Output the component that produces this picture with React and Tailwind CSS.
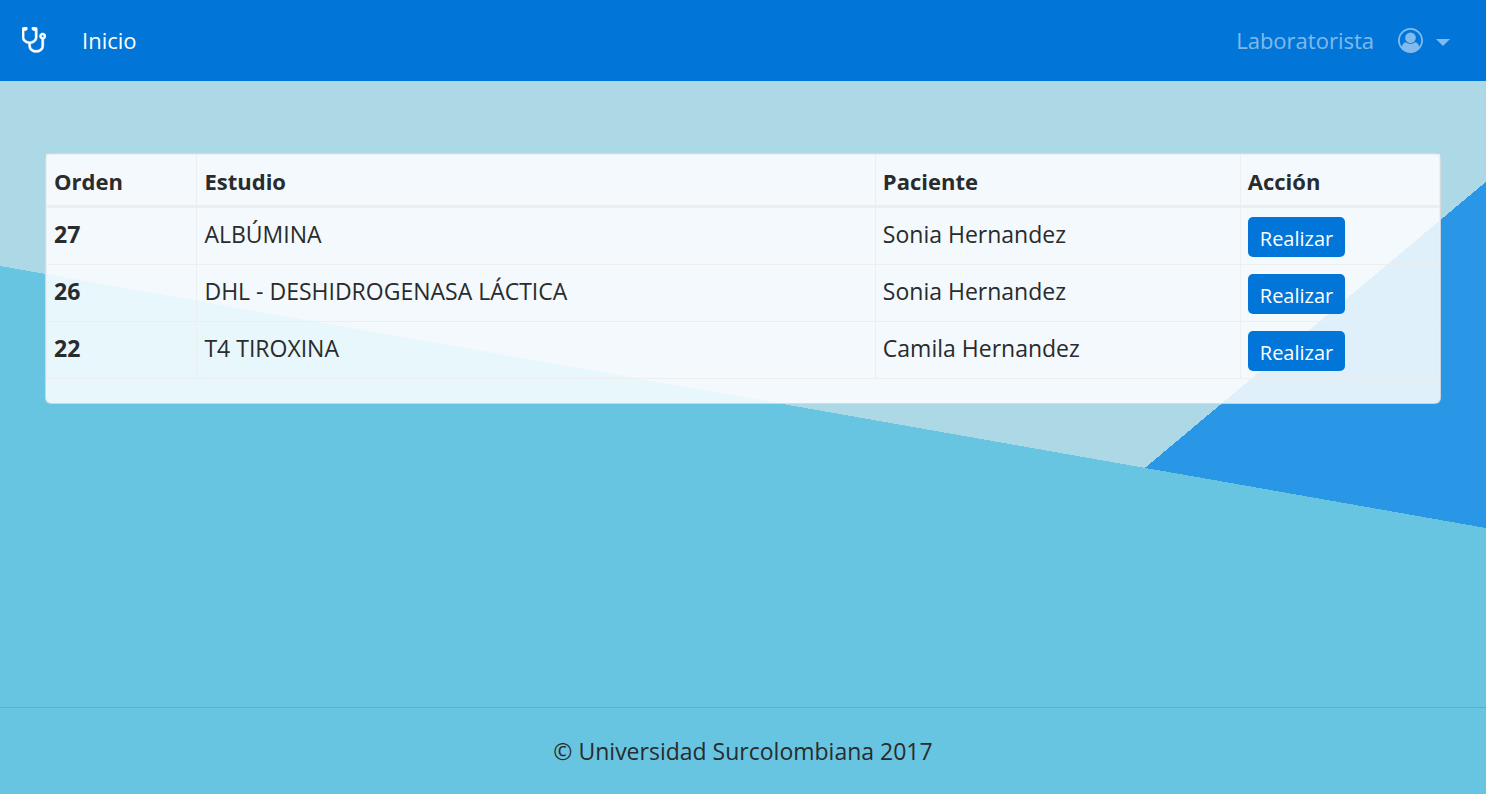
const orders = [
  { id: 27, study: "ALBÚMINA", patient: "Sonia Hernandez" },
  { id: 26, study: "DHL - DESHIDROGENASA LÁCTICA", patient: "Sonia Hernandez" },
  { id: 22, study: "T4 TIROXINA", patient: "Camila Hernandez" },
];

function StethoscopeIcon() {
  return (
    <svg viewBox="64 128 1408 1472" className="h-[26px] w-6" fill="currentColor" stroke="currentColor" strokeWidth="24" aria-hidden="true">
      <path d="M1344 640q0-26-19-45t-45-19-45 19-19 45 19 45 45 19 45-19 19-45zm128 0q0 62-35.500 111t-92.500 70v395q0 159-131.500 271.500t-316.500 112.500-316.500-112.500-131.500-271.500v-132q-164-20-274-128t-110-252v-512q0-26 19-45t45-19q6 0 16 2 17-30 47-48t65-18q53 0 90.500 37.500t37.500 90.500-37.500 90.500-90.500 37.500q-33 0-64-18v402q0 106 94 181t226 75 226-75 94-181v-402q-31 18-64 18-53 0-90.500-37.500t-37.500-90.500 37.500-90.500 90.500-37.500q35 0 65 18t47 48q10-2 16-2 26 0 45 19t19 45v512q0 144-110 252t-274 128v132q0 106 94 181t226 75 226-75 94-181v-395q-57-21-92.500-70t-35.500-111q0-80 56-136t136-56 136 56 56 136z" />
    </svg>
  );
}

function UserIcon() {
  return (
    <svg viewBox="0 0 1792 1792" className="size-[25px]" fill="currentColor" aria-hidden="true">
      <path d="M896 0q182 0 348 71t286 191 191 286 71 348q0 181-70.500 347t-190.500 286-286 191.500-349 71.500-349-71-285.500-191.500-190.500-286-71-347.500 71-348 191-286 286-191 348-71zm619 1351q149-205 149-455 0-156-61-298t-164-245-245-164-298-61-298 61-245 164-164 245-61 298q0 250 149 455 66-327 306-327 131 128 313 128t313-128q240 0 306 327zm-235-647q0-159-112.500-271.500t-271.500-112.500-271.500 112.500-112.500 271.500 112.500 271.500 271.500 112.500 271.500-112.500 112.500-271.500z" />
    </svg>
  );
}

function Navbar() {
  return (
    <nav className="flex items-center justify-between bg-[#0275d8] pt-[22px] pr-9 pb-[23px] pl-[22px] text-[22px]">
      <div className="flex items-center gap-9 text-white">
        <a href="#" aria-label="Laboratorio">
          <StethoscopeIcon />
        </a>
        <a href="#">Inicio</a>
      </div>
      <div className="flex items-center gap-6 text-white/50">
        <a href="#">Laboratorista</a>
        <button type="button" aria-label="Cuenta" className="flex items-center gap-[13px]">
          <UserIcon />
          <span className="mt-1 border-x-[7px] border-t-[7px] border-x-transparent border-t-current" />
        </button>
      </div>
    </nav>
  );
}

function OrdersTable() {
  return (
    <table className="mb-6 w-full table-fixed border-collapse text-left">
      <colgroup>
        <col className="w-[10.8%]" />
        <col className="w-[48.7%]" />
        <col className="w-[26.2%]" />
        <col className="w-[14.3%]" />
      </colgroup>
      <thead>
        <tr className="border-b-[3px] border-[#eceeef]">
          {["Orden", "Estudio", "Paciente", "Acción"].map((title) => (
            <th key={title} scope="col" className="border-x border-t border-[#eceeef] px-[7px] pt-2 pb-1.5 text-[22px] font-bold">
              {title}
            </th>
          ))}
        </tr>
      </thead>
      <tbody>
        {orders.map(({ id, study, patient }) => (
          <tr key={id} className="align-top">
            <th scope="row" className="border border-[#eceeef] px-[7px] py-2 font-bold">{id}</th>
            <td className="border border-[#eceeef] px-[7px] py-2">{study}</td>
            <td className="border border-[#eceeef] px-[7px] py-2">{patient}</td>
            <td className="border border-[#eceeef] px-[7px] pt-[9px] pb-[7px]">
              <button type="button" className="flex h-10 items-center rounded-[5px] bg-[#0275d8] px-3 pt-1 text-[20px] leading-8 text-white">
                Realizar
              </button>
            </td>
          </tr>
        ))}
      </tbody>
    </table>
  );
}

export default function App() {
  return (
    <div className="flex min-h-screen flex-col bg-[linear-gradient(10deg,#68c5e1_50%,transparent_50%),linear-gradient(140deg,#add8e6_70%,#2997e5_70%)] font-['Open_Sans',sans-serif] text-[23px] leading-9 text-[#292b2c]">
      <Navbar />
      <main className="flex-1 px-[45px] pt-[72px] pb-9">
        <section className="rounded-md border border-black/12 bg-white/85">
          <OrdersTable />
        </section>
      </main>
      <footer className="border-t border-black/10 py-[25px] text-center">© Universidad Surcolombiana 2017</footer>
    </div>
  );
}
